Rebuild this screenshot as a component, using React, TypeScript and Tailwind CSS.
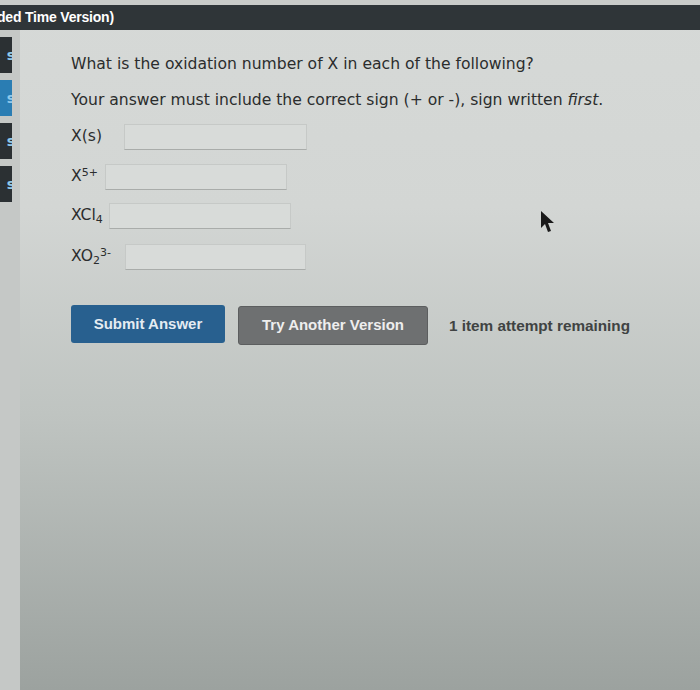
import React from "react";

function Cursor() {
  return (
    <svg width="18" height="26" viewBox="0 0 18 26" className="absolute left-[539px] top-[209px]">
      <path d="M2 2 L2 19 L6 15 L9 23 L12 22 L9 14 L15 14 Z" fill="#1a1a1a" />
    </svg>
  );
}

function Field({ w }: { w: string }) {
  return <div className={`h-[26px] ${w} border border-[#c6c9c7] border-b-[#a9acaa] bg-[#d8dbd9]`} />;
}

export default function App() {
  return (
    <div
      className="relative w-[700px] h-[690px] overflow-hidden bg-[linear-gradient(180deg,#d6d9d7_0%,#d3d6d4_30%,#bfc4c1_60%,#9ca29f_100%)]"
      style={{ fontFamily: '"DejaVu Sans", Verdana, sans-serif' }}
    >
      <div className="h-[5px] bg-[#c9cbc9]" />
      <div className="h-[25px] bg-[#2f3538] flex items-center">
        <span className="text-white font-bold text-[14px] -ml-[3px] tracking-[-0.2px]" style={{ fontFamily: '"Liberation Sans", Arial, sans-serif' }}>
          ded Time Version)
        </span>
      </div>
      <div className="flex">
        <div className="w-[20px] flex flex-col gap-[7px] pt-[7px] bg-[#c5c8c6] h-[660px]">
          {["#2b3033", "#2a7db3", "#2b3033", "#2b3033"].map((c, i) => (
            <div key={i} className="w-[12px] h-[36px] flex items-center justify-end overflow-hidden" style={{ background: c }}>
              <span className="text-[#8fc9ec] font-bold text-[14px] -mr-[3px]">s</span>
            </div>
          ))}
        </div>
        <div className="flex-1 pl-[51px] pt-[24px] text-[#2b2d2d] text-[15.6px]">
          <p className="leading-[20px]">What is the oxidation number of X in each of the following?</p>
          <p className="leading-[20px] mt-[16px]">
            Your answer must include the correct sign (+ or -), sign written <i>first</i>.
          </p>
          <div className="mt-[14px] flex items-center gap-[22px]">
            <span>X(s)</span>
            <Field w="w-[183px]" />
          </div>
          <div className="mt-[14px] flex items-center gap-[7px]">
            <span>
              X<sup className="text-[11px]">5+</sup>
            </span>
            <Field w="w-[182px]" />
          </div>
          <div className="mt-[13px] flex items-center gap-[6px]">
            <span>
              XCl<sub className="text-[11px]">4</sub>
            </span>
            <Field w="w-[182px]" />
          </div>
          <div className="mt-[15px] flex items-center gap-[14px]">
            <span>
              XO<sub className="text-[11px]">2</sub>
              <sup className="text-[11px]">3-</sup>
            </span>
            <Field w="w-[181px]" />
          </div>
          <div className="mt-[33px] flex items-center" style={{ fontFamily: '"Liberation Sans", Arial, sans-serif' }}>
            <div className="w-[154px] h-[38px] rounded-[3px] bg-[#28608f] text-[#e4ecf2] font-bold text-[15px] flex items-center justify-center">
              Submit Answer
            </div>
            <div className="ml-[13px] mt-[3px] w-[190px] h-[39px] rounded-[3px] bg-[#6e7071] border border-[#5c5e5f] text-[#eeeeee] font-bold text-[15px] flex items-center justify-center">
              Try Another Version
            </div>
            <span className="ml-[21px] mt-[4px] font-bold text-[15.3px] text-[#404343]">1 item attempt remaining</span>
          </div>
        </div>
      </div>
      <Cursor />
    </div>
  );
}
